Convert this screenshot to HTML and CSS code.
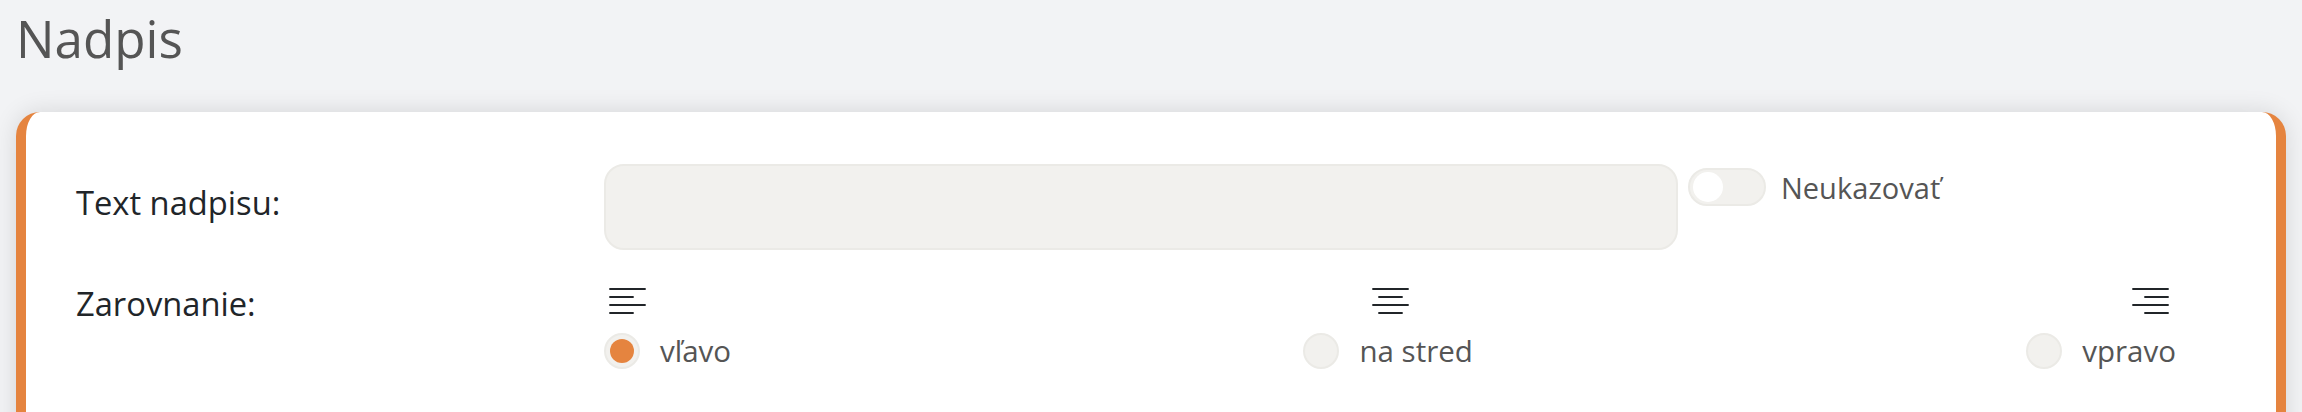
FILE: index.html
```html
<!DOCTYPE html>
<html lang="sk">
<head>
  <meta charset="UTF-8" />
  <title>Nadpis</title>
  <link rel="stylesheet" href="styles.css">
</head>
<body>
  <h1>Nadpis</h1>
  <div class="card">
    <div class="row row-text">
      <label class="row-label">Text nadpisu:</label>
      <input type="text" class="text-input">
      <span class="toggle"><span class="toggle-knob"></span></span>
      <span class="toggle-label">Neukazovať</span>
    </div>
    <div class="row row-align">
      <label class="row-label">Zarovnanie:</label>
      <div class="align-options">
        <div class="align-option">
          <svg class="align-icon" width="38" height="28" viewBox="0 0 38 28">
            <path d="M0.3 2h36.4M0.3 10h24.4M0.3 18h36.4M0.3 26h24.4" />
          </svg>
          <div class="radio-line">
            <span class="radio radio-on"><span class="radio-dot"></span></span>
            <span class="radio-text">vľavo</span>
          </div>
        </div>
        <div class="align-option option-center">
          <svg class="align-icon" width="38" height="28" viewBox="0 0 38 28">
            <path d="M0.3 2h36.4M6.3 10h24.4M0.3 18h36.4M6.3 26h24.4" />
          </svg>
          <div class="radio-line">
            <span class="radio"></span>
            <span class="radio-text">na stred</span>
          </div>
        </div>
        <div class="align-option option-right">
          <svg class="align-icon" width="38" height="28" viewBox="0 0 38 28">
            <path d="M0.3 2h36.4M12.3 10h24.4M0.3 18h36.4M12.3 26h24.4" />
          </svg>
          <div class="radio-line">
            <span class="radio"></span>
            <span class="radio-text">vpravo</span>
          </div>
        </div>
      </div>
    </div>
  </div>
</body>
</html>
```

FILE: styles.css
```css
html, body { height: 412px; overflow: hidden; }
body { margin: 0; background: #f2f3f5; font-family: "Open Sans", sans-serif; color: #212529; }
h1 { margin: 0; padding: 4px 0 0 16px; height: 112px; box-sizing: border-box; font-size: 51.2px; font-weight: 400; line-height: 68px; color: #555; }

.card { margin: 0 16px; height: 340px; box-sizing: border-box; padding: 52px 50px 0; background: #fff; border-left: 10px solid #e5843f; border-right: 10px solid #e5843f; border-radius: 24px; box-shadow: 0 0 24px rgba(0,0,0,0.12); }

.row { display: flex; }
.row-label { width: 528px; flex: none; font-size: 32.7px; line-height: 42px; }
.row-text { height: 86px; }
.row-text .row-label { padding-top: 18px; }
.row-align { margin-top: 35px; }
.row-align .row-label { margin-top: -2px; }

.text-input { width: 1074px; height: 86px; box-sizing: border-box; background: #f2f1ee; border: 2px solid #ebeae6; border-radius: 20px; padding: 0 20px; flex: none; }

.toggle { width: 78px; height: 38px; box-sizing: border-box; margin: 4px 15px 0 10px; flex: none; display: flex; align-items: center; padding-left: 3px; background: #f2f1ee; border: 2px solid #ebeae6; border-radius: 19px; }
.toggle-knob { width: 30px; height: 30px; border-radius: 50%; background: #fff; }
.toggle-label { margin-top: 4px; font-size: 29px; line-height: 40px; color: #555; }

.align-options { width: 1572px; display: flex; justify-content: space-between; }
.align-option { display: flex; flex-direction: column; align-items: flex-start; }
.option-center { align-items: center; margin-left: 19px; }
.option-center .align-icon { margin-left: 8px; margin-right: 3px; }
.option-right { align-items: flex-end; }
.align-icon { display: block; margin: 2px 6px 0 5px; fill: none; stroke: #212529; stroke-width: 2; }

.radio-line { display: flex; align-items: center; margin-top: 17px; }
.radio { width: 36px; height: 36px; box-sizing: border-box; flex: none; display: flex; align-items: center; justify-content: center; background: #f2f1ee; border: 2px solid #ebeae6; border-radius: 50%; margin-right: 20px; }
.radio-dot { width: 24px; height: 24px; border-radius: 50%; background: #e5843f; }
.radio-text { font-size: 29.5px; line-height: 38px; color: #555; }
```
